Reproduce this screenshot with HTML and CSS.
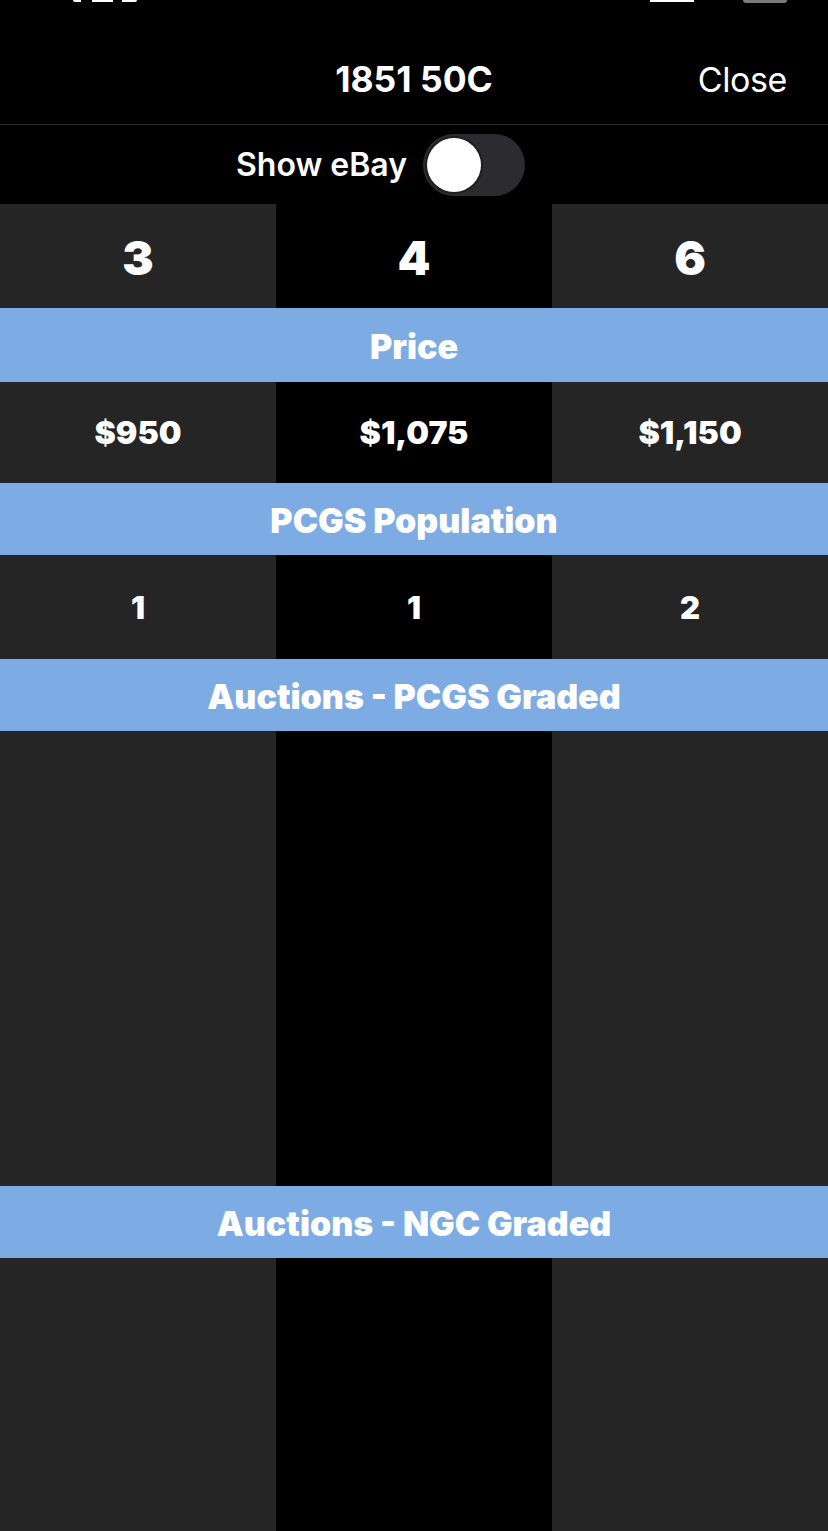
FILE: index.html
```html
<!DOCTYPE html>
<html lang="en">
<head>
<meta charset="utf-8">
<title>1851 50C</title>
<link rel="stylesheet" href="styles.css">
</head>
<body>
<div class="screen">
  <div class="status">
    <span class="st-time"></span>
    <span class="st-spacer"></span>
    <span class="st-signal"></span>
    <span class="st-battery"></span>
  </div>
  <header class="nav">
    <div class="nav-side"></div>
    <div class="nav-title">1851 50C</div>
    <div class="nav-side nav-close">Close</div>
  </header>
  <div class="toggle-row">
    <span class="toggle-label">Show eBay</span>
    <span class="switch"><span class="knob"></span></span>
  </div>

  <div class="row grades">
    <div class="cell">3</div>
    <div class="cell">4</div>
    <div class="cell">6</div>
  </div>

  <div class="section section-first">Price</div>
  <div class="row prices">
    <div class="cell">$950</div>
    <div class="cell">$1,075</div>
    <div class="cell">$1,150</div>
  </div>

  <div class="section">PCGS Population</div>
  <div class="row pops">
    <div class="cell">1</div>
    <div class="cell">1</div>
    <div class="cell">2</div>
  </div>

  <div class="section">Auctions - PCGS Graded</div>
  <div class="row empty pcgs">
    <div class="cell"></div>
    <div class="cell"></div>
    <div class="cell"></div>
  </div>

  <div class="section">Auctions - NGC Graded</div>
  <div class="row empty ngc">
    <div class="cell"></div>
    <div class="cell"></div>
    <div class="cell"></div>
  </div>
</div>
</body>
</html>
```

FILE: styles.css
```css
* { box-sizing: border-box; }
html, body {
  margin: 0;
  padding: 0;
  background: #000;
}
body {
  font-family: Inter, "Liberation Sans", sans-serif;
  color: #fff;
  width: 828px;
  height: 1531px;
  overflow: hidden;
}
.screen {
  display: flex;
  flex-direction: column;
  height: 1531px;
}

/* status bar, mostly cut off */
.status {
  height: 4px;
  display: flex;
  align-items: flex-start;
  padding-left: 73px;
  padding-right: 41px;
}
.st-time {
  width: 64px;
  height: 2px;
  background: linear-gradient(90deg, #fff 0 12%, transparent 12% 30%, #fff 30% 62%, transparent 62% 76%, #fff 76% 100%);
  border-radius: 0 0 2px 2px;
}
.st-spacer { flex: 1; }
.st-signal {
  width: 44px;
  height: 2px;
  background: #fff;
  margin-right: 49px;
}
.st-battery {
  width: 44px;
  height: 3px;
  background: #7a7a7a;
  border-radius: 0 0 4px 4px;
}

/* nav */
.nav {
  height: 121px;
  display: grid;
  grid-template-columns: 1fr auto 1fr;
  align-items: center;
  padding-top: 30px;
  border-bottom: 1px solid #2a2a2a;
}
.nav-title {
  font-size: 35.5px;
  font-weight: 700;
  text-align: center;
}
.nav-close {
  font-size: 34px;
  font-weight: 400;
  letter-spacing: -0.4px;
  text-align: right;
  padding-right: 41px;
}

/* toggle */
.toggle-row {
  height: 79px;
  flex-shrink: 0;
  display: flex;
  align-items: center;
  justify-content: center;
  gap: 16px;
  padding-right: 67px;
}
.toggle-label {
  font-size: 32px;
  font-weight: 600;
}
.switch {
  width: 102px;
  height: 62px;
  border-radius: 31px;
  background: #2c2c2e;
  display: flex;
  align-items: center;
  padding-left: 4px;
}
.knob {
  width: 54px;
  height: 54px;
  border-radius: 50%;
  background: #fff;
  box-shadow: 0 0 0 2px #1e1e1e;
}

/* table rows */
.row {
  display: grid;
  grid-template-columns: repeat(3, 1fr);
  flex-shrink: 0;
}
.cell {
  display: flex;
  align-items: center;
  justify-content: center;
  background: #252525;
  font-weight: 900;
}
.cell:nth-child(2) { background: #000; }

.grades { height: 104px; }
.grades .cell { font-size: 47px; padding-top: 2px; }

.prices { height: 101px; }
.prices .cell { font-size: 32px; }

.pops { height: 104px; }
.pops .cell { font-size: 31px; }

.pcgs { height: 455px; }
.ngc { flex: 1 1 auto; }

.section {
  height: 72px;
  flex-shrink: 0;
  background: #7dabe3;
  display: flex;
  align-items: center;
  justify-content: center;
  font-size: 34px;
  font-weight: 900;
  padding-top: 2px;
}
.section-first { height: 74px; }
```
